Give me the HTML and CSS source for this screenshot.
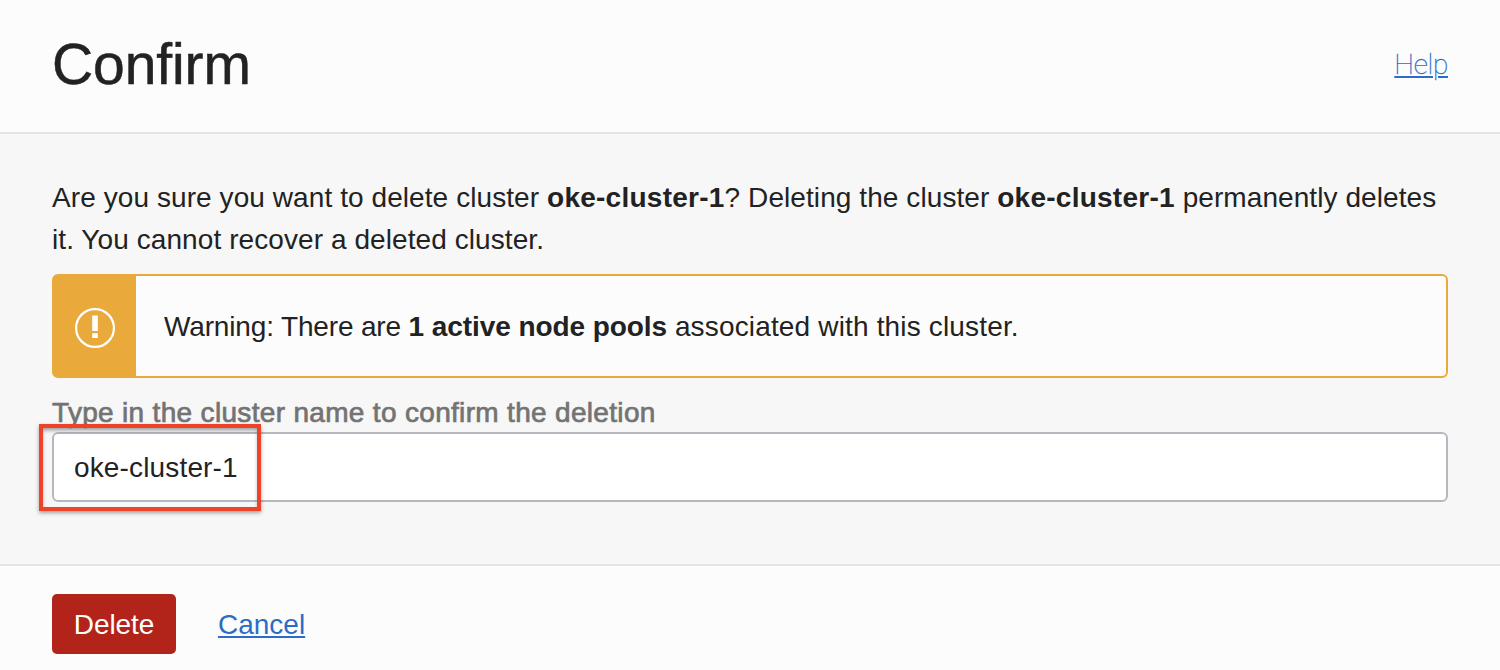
FILE: index.html
```html
<!DOCTYPE html>
<html lang="en">
<head>
<meta charset="utf-8">
<title>Confirm</title>
<link rel="stylesheet" href="styles.css">
</head>
<body>
<div class="dialog">
  <header class="header">
    <h1 class="title">Confirm</h1>
    <a class="link help" href="#">Help</a>
  </header>
  <main class="content">
    <p class="message"><span class="line">Are you sure you want to delete cluster <b>oke-cluster-1</b>? Deleting the cluster <b>oke-cluster-1</b> permanently deletes</span> <span class="line">it. You cannot recover a deleted cluster.</span></p>
    <div class="warning">
      <div class="warning-icon">
        <svg width="40" height="40" viewBox="0 0 40 40" fill="none" stroke="#fff"><circle cx="20" cy="20" r="18.9" stroke-width="2.2"/><path d="M20 7.5V23M20 25.2v4.8" stroke-width="5.6"/></svg>
      </div>
      <p class="warning-text"><span class="warning-lead">Warning: There are </span><b>1 active node pools</b> associated with this cluster.</p>
    </div>
    <label class="label" for="name">Type in the cluster name to confirm the deletion</label>
    <div class="field">
      <input class="input" id="name" type="text" value="oke-cluster-1">
      <div class="highlight"></div>
    </div>
  </main>
  <footer class="footer">
    <button class="delete" type="button">Delete</button>
    <a class="link cancel" href="#">Cancel</a>
  </footer>
</div>
</body>
</html>
```
FILE: styles.css
```css
* { box-sizing: border-box; }
body { margin: 0; font-family: "Liberation Sans", Arial, sans-serif; font-size: 28px; color: #222; }
p, h1 { margin: 0; }
.dialog { height: 670px; display: flex; flex-direction: column; background: #fcfcfc; overflow: hidden; }
.header { height: 134px; padding: 0 52px; display: flex; justify-content: space-between; border-bottom: 2px solid #e4e4e4; }
.title { font-size: 57px; font-weight: 400; line-height: 64px; padding-top: 32px; letter-spacing: -0.1px; -webkit-text-stroke: 0.5px #222; }
.link { color: #2b6cc8; text-decoration: underline; text-decoration-thickness: 2px; text-underline-offset: 2px; }
.help { padding-top: 49px; line-height: 32px; font-family: Roboto, "Liberation Sans", sans-serif; font-weight: 100; letter-spacing: -0.3px; -webkit-text-stroke: 0.3px #2b6cc8; }
.content { height: 432px; padding: 43px 52px 0; background: #f7f7f7; border-bottom: 2px solid #e4e4e4; }
.message { line-height: 42px; letter-spacing: 0.08px; }
.message b { letter-spacing: 0.25px; }
.line { display: block; white-space: nowrap; }
.warning { height: 104px; margin-top: 13px; display: flex; border: 2px solid #e9aa3b; border-radius: 6px; background: #fcfcfc; }
.warning-icon { width: 82px; padding: 32px 0 0 21px; background: #e9aa3b; }
.warning-icon svg { display: block; }
.warning-text { padding-left: 28px; line-height: 101px; white-space: nowrap; letter-spacing: 0.16px; }
.warning-text b { letter-spacing: -0.08px; }
.warning-lead { letter-spacing: -0.15px; }
.label { display: block; height: 54px; padding-top: 19px; line-height: 31px; white-space: nowrap; color: #737373; -webkit-text-stroke: 0.7px #737373; letter-spacing: 0.32px; }
.field { position: relative; }
.input { display: block; width: 100%; height: 70px; padding: 2px 20px 0; border: 2px solid #b5b9bf; border-radius: 6px; background: #fff; font: inherit; color: inherit; letter-spacing: 0.15px; outline: 0; }
.highlight { position: absolute; left: -13px; top: -8px; width: 222px; height: 87px; border: 4px solid #ee4328; box-shadow: 0 2px 4px rgba(0,0,0,.35), inset 0 3px 4px -1px rgba(0,0,0,.4); }
.footer { padding: 28px 52px 0; display: flex; align-items: flex-start; }
.delete { width: 124px; height: 60px; padding: 2px 0 0; border: 0; border-radius: 5px; background: #b22419; color: #fff; font: inherit; letter-spacing: -0.1px; }
.cancel { margin-left: 42px; line-height: 62px; }
```
